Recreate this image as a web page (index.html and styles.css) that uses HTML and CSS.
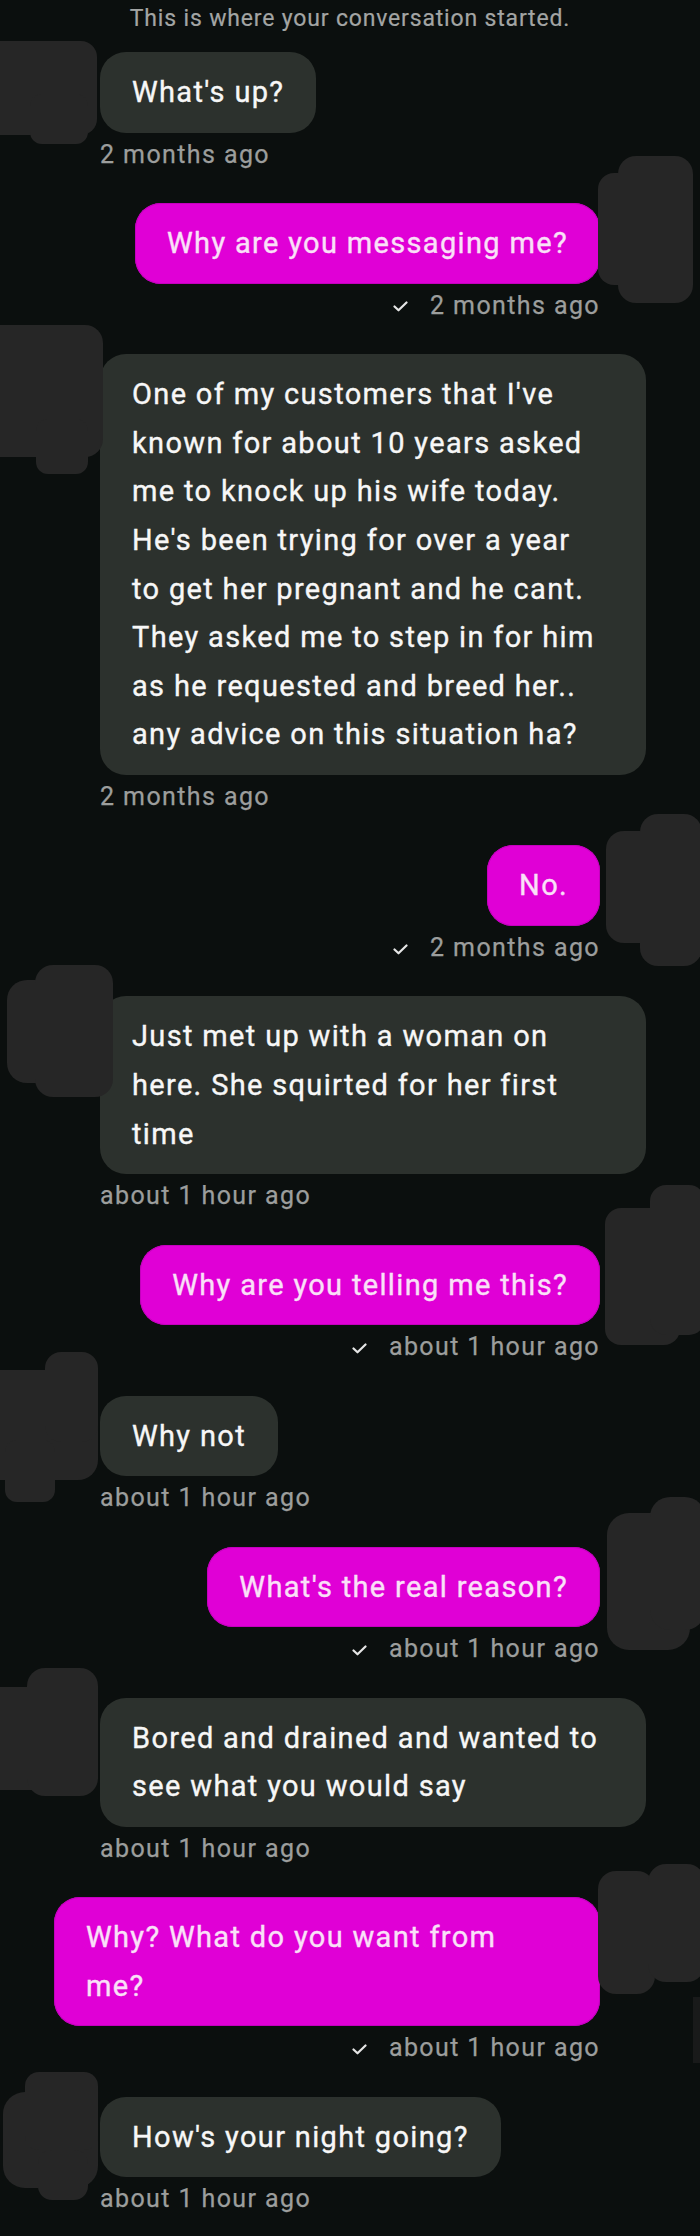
FILE: index.html
```html
<!DOCTYPE html>
<html lang="en">
<head>
<meta charset="utf-8">
<title>Conversation</title>
<link rel="stylesheet" href="styles.css">
</head>
<body>
<main class="chat">
  <p class="intro">This is where your conversation started.</p>

  <section class="msg msg--in">
    <svg class="redact redact--1" width="100" height="106" viewBox="0 40 100 106"><rect x="-20" y="42" width="117" height="94" rx="16"/><rect x="30" y="95" width="58" height="50" rx="12"/></svg>
    <div class="bubble">What's up?</div>
    <div class="meta">2 months ago</div>
  </section>

  <section class="msg msg--out">
    <svg class="redact redact--2" width="104" height="151" viewBox="596 154 104 151"><rect x="598" y="173" width="80" height="112" rx="16"/><rect x="618" y="156" width="75" height="147" rx="18"/></svg>
    <div class="bubble">Why are you messaging me?</div>
    <div class="meta"><svg class="check" width="15" height="11" viewBox="0 0 15 11"><path d="M1.5 5.5 L5.5 9.3 L13.5 1.5"/></svg>2 months ago</div>
  </section>

  <section class="msg msg--in">
    <svg class="redact redact--3" width="104" height="158" viewBox="0 320 104 158"><rect x="-20" y="326" width="123" height="132" rx="18"/><rect x="36" y="420" width="52" height="55" rx="12"/></svg>
    <div class="bubble bubble--wide">One of my customers that I've<br>known for about 10 years asked<br>me to knock up his wife today.<br>He's been trying for over a year<br>to get her pregnant and he cant.<br>They asked me to step in for him<br>as he requested and breed her..<br>any advice on this situation ha?</div>
    <div class="meta">2 months ago</div>
  </section>

  <section class="msg msg--out">
    <svg class="redact redact--4" width="102" height="158" viewBox="598 812 102 158"><rect x="606" y="832" width="80" height="112" rx="18"/><rect x="640" y="815" width="62" height="152" rx="18"/></svg>
    <div class="bubble">No.</div>
    <div class="meta"><svg class="check" width="15" height="11" viewBox="0 0 15 11"><path d="M1.5 5.5 L5.5 9.3 L13.5 1.5"/></svg>2 months ago</div>
  </section>

  <section class="msg msg--in">
    <svg class="redact redact--5" width="116" height="140" viewBox="0 960 116 140"><rect x="7" y="980" width="106" height="103" rx="20"/><rect x="35" y="965" width="78" height="132" rx="18"/></svg>
    <div class="bubble bubble--wide">Just met up with a woman on<br>here. She squirted for her first<br>time</div>
    <div class="meta">about 1 hour ago</div>
  </section>

  <section class="msg msg--out">
    <svg class="redact redact--6" width="100" height="170" viewBox="600 1180 100 170"><rect x="605" y="1208" width="75" height="137" rx="16"/><rect x="650" y="1185" width="55" height="150" rx="16"/></svg>
    <div class="bubble">Why are you telling me this?</div>
    <div class="meta"><svg class="check" width="15" height="11" viewBox="0 0 15 11"><path d="M1.5 5.5 L5.5 9.3 L13.5 1.5"/></svg>about 1 hour ago</div>
  </section>

  <section class="msg msg--in">
    <svg class="redact redact--7" width="100" height="157" viewBox="0 1348 100 157"><rect x="-20" y="1370" width="118" height="110" rx="20"/><rect x="45" y="1352" width="53" height="90" rx="16"/><rect x="5" y="1440" width="50" height="62" rx="12"/></svg>
    <div class="bubble">Why not</div>
    <div class="meta">about 1 hour ago</div>
  </section>

  <section class="msg msg--out">
    <svg class="redact redact--8" width="100" height="158" viewBox="600 1494 100 158"><rect x="607" y="1513" width="83" height="137" rx="22"/><rect x="650" y="1497" width="55" height="133" rx="20"/></svg>
    <div class="bubble">What's the real reason?</div>
    <div class="meta"><svg class="check" width="15" height="11" viewBox="0 0 15 11"><path d="M1.5 5.5 L5.5 9.3 L13.5 1.5"/></svg>about 1 hour ago</div>
  </section>

  <section class="msg msg--in">
    <svg class="redact redact--9" width="100" height="136" viewBox="0 1664 100 136"><rect x="-20" y="1687" width="115" height="103" rx="20"/><rect x="27" y="1668" width="71" height="128" rx="18"/></svg>
    <div class="bubble bubble--wide">Bored and drained and wanted to<br>see what you would say</div>
    <div class="meta">about 1 hour ago</div>
  </section>

  <section class="msg msg--out">
    <svg class="redact redact--10" width="104" height="208" viewBox="596 1862 104 208"><rect x="598" y="1872" width="57" height="123" rx="18"/><rect x="648" y="1865" width="57" height="118" rx="18"/><rect class="sliver" x="693" y="1998" width="10" height="66"/></svg>
    <div class="bubble bubble--wide">Why? What do you want from<br>me?</div>
    <div class="meta"><svg class="check" width="15" height="11" viewBox="0 0 15 11"><path d="M1.5 5.5 L5.5 9.3 L13.5 1.5"/></svg>about 1 hour ago</div>
  </section>

  <section class="msg msg--in">
    <svg class="redact redact--11" width="100" height="132" viewBox="0 2070 100 132"><rect x="3" y="2092" width="95" height="96" rx="22"/><rect x="25" y="2072" width="73" height="78" rx="14"/><rect x="38" y="2150" width="50" height="50" rx="14"/></svg>
    <div class="bubble">How's your night going?</div>
    <div class="meta">about 1 hour ago</div>
  </section>
</main>
</body>
</html>
```

FILE: styles.css
```css
html, body {
  margin: 0;
  padding: 0;
  background: #0b0f0e;
}

body {
  width: 700px;
  min-height: 2236px;
  font-family: Roboto, "Liberation Sans", sans-serif;
}

.chat {
  padding-top: 3px;
  padding-bottom: 10px;
}

.intro {
  margin: 0;
  text-align: center;
  font-size: 23px;
  line-height: 32px;
  letter-spacing: 0.036em;
  color: #a3a5a4;
  -webkit-text-stroke: 0.2px #a3a5a4;
}

.msg {
  position: relative;
  display: flex;
  flex-direction: column;
  margin-top: 32.4px;
}

.intro + .msg {
  margin-top: 17.3px;
}

.msg--in {
  align-items: flex-start;
  padding-left: 100px;
}

.msg--out {
  align-items: flex-end;
  padding-right: 100px;
}

.bubble {
  box-sizing: border-box;
  max-width: 546px;
  padding: 16px 32px;
  border-radius: 26px;
  font-size: 29px;
  line-height: 48.6px;
  letter-spacing: 0.046em;
}

.bubble--wide {
  width: 546px;
}

.msg--in .bubble {
  background: #2c312d;
  color: #f7f7f7;
  -webkit-text-stroke: 0.35px #f7f7f7;
}

.msg--out .bubble {
  background: #e000d6;
  color: #fae0f8;
  -webkit-text-stroke: 0.35px #fae0f8;
  box-shadow: inset 0 0 0 1px #c400bd;
}

.meta {
  display: flex;
  align-items: center;
  gap: 22px;
  margin-top: 6px;
  font-size: 25px;
  line-height: 32px;
  letter-spacing: 0.056em;
  color: #9c9e9d;
  -webkit-text-stroke: 0.25px #9c9e9d;
}

.check {
  margin-top: 2px;
  fill: none;
  stroke: #e6e6e6;
  stroke-width: 2.2;
  stroke-linecap: round;
  stroke-linejoin: round;
}

.redact {
  position: absolute;
  z-index: 2;
}

.redact rect {
  fill: #262626;
}

.redact .sliver {
  fill: #191a1a;
}

.redact--1 { left: 0; top: -13px; }
.redact--2 { left: 596px; top: -49px; }
.redact--3 { left: 0; top: -35px; }
.redact--4 { left: 598px; top: -34px; }
.redact--5 { left: 0; top: -36px; }
.redact--6 { left: 600px; top: -65px; }
.redact--7 { left: 0; top: -48px; }
.redact--8 { left: 600px; top: -53px; }
.redact--9 { left: 0; top: -34px; }
.redact--10 { left: 596px; top: -36px; }
.redact--11 { left: 0; top: -27px; }
```
